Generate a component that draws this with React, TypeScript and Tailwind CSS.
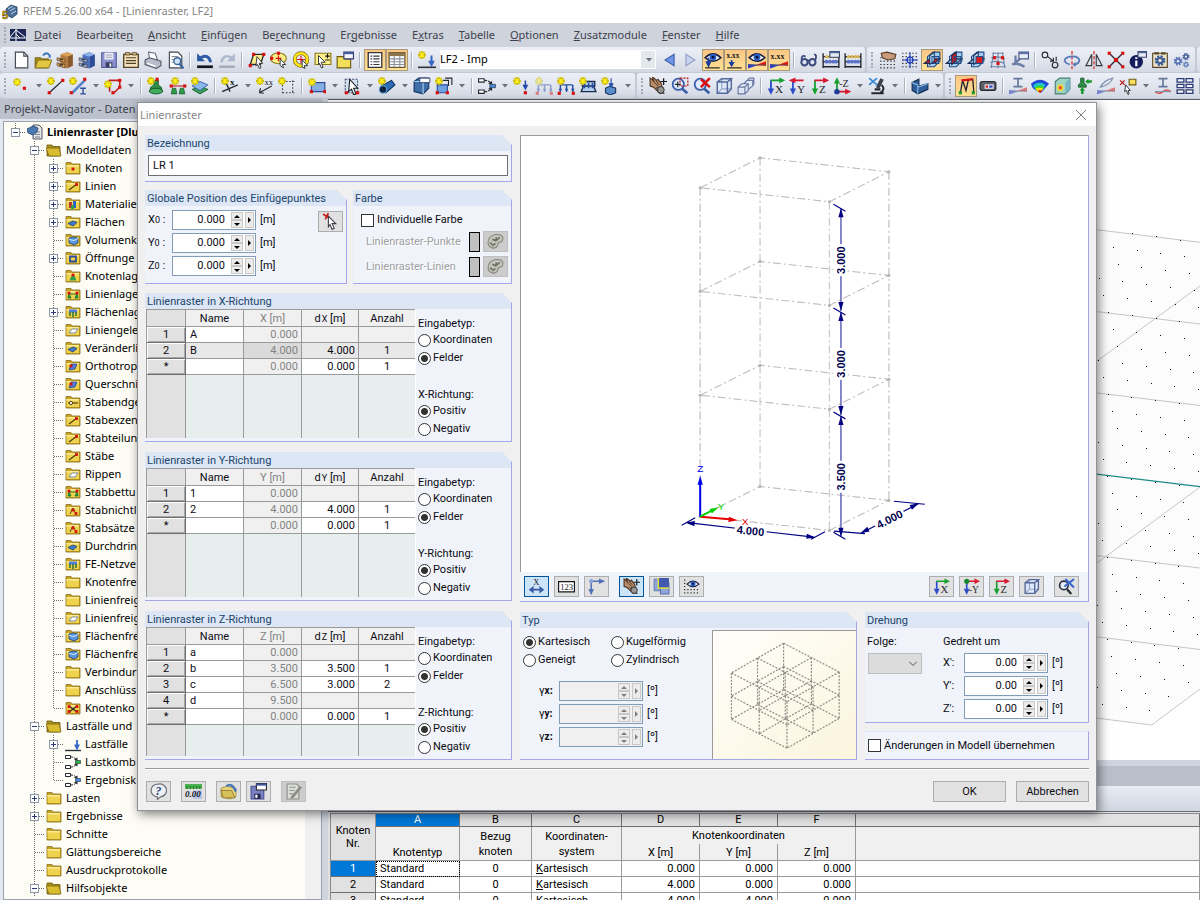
import type { ReactNode } from "react";

/* ---------- icon drawing helpers (16 x 16 grid) ---------- */

function Svg({ children, className = "size-[18px]" }: { children: ReactNode; className?: string }) {
  return (
    <svg viewBox="0 0 16 16" className={`${className} shrink-0`} fill="none" aria-hidden="true">
      {children}
    </svg>
  );
}

const Star = ({ x = 0, y = 0 }: { x?: number; y?: number }) => (
  <g transform={`translate(${x} ${y})`}>
    <path d="M3.5 0v7M0 3.5h7M1 1l5 5M6 1L1 6" stroke="#9c8f10" strokeWidth="1.8" />
    <path d="M3.5 0v7M0 3.5h7M1 1l5 5M6 1L1 6" stroke="#ffee1a" strokeWidth="1" />
  </g>
);

const Dot = ({ x, y, c = "#d81010" }: { x: number; y: number; c?: string }) => (
  <rect x={x - 1.4} y={y - 1.4} width="2.8" height="2.8" fill={c} />
);

const Axis = ({ h, v, t, flip = false, up = false, root }: { h: string; v: string; t: string; flip?: boolean; up?: boolean; root?: string }) => (
  <>
    <path d={up ? "M3.5 13V3M2 5l1.5-3L5 5z" : "M3.5 3v10M2 11l1.5 3L5 11z"} stroke={v} fill={v} strokeWidth="1.6" />
    {flip ? (
      <path d="M4 3h9M5 1.5L1.5 3 5 4.500z" stroke={h} fill={h} strokeWidth="1.4" />
    ) : (
      <path d={up ? "M3 13h9M11.500 11.5l3 1.5-3 1.5z" : "M3 3h9M11.500 1.5l3 1.5-3 1.5z"} stroke={h} fill={h} strokeWidth="1.4" />
    )}
    {root && <circle cx="3.5" cy={up ? 13 : 3} r="2.4" fill={root} />}
    <text x={t.length > 1 ? 5.5 : 7} y={up ? 9 : 14.5} fontSize={t.length > 1 ? 9 : 10} fill="#26262c" fontFamily="Liberation Serif">{t}</text>
  </>
);

const Drawer = ({ a, b, c }: { a: string; b: string; c: string }) => (
  <>
    <path d="M4 3l6-2 5 2v10l-5 2.500V5z" fill={b} />
    <path d="M4 3l6-2 5 2-5 2z" fill={a} />
    <path d="M4 3l6 2v10.500l-6-2z" fill={c} />
    <path d="M1 6l7 1.500V10L1 8.500zM1 10.500L8 12v3L1 13z" fill={a} stroke="#4a3626" strokeWidth=".6" />
    <path d="M3 7.800h3M3 12.300h3" stroke="#1d1a18" strokeWidth="1" />
  </>
);

const Folder = () => (
  <>
    <path d="M1 2.500h5l1 1.500h8v10H1z" fill="#c9a21e" stroke="#86701c" strokeWidth=".8" />
    <path d="M1.500 5h12.500v8H1.500z" fill="#efd24e" />
    <path d="M1.500 5h12.500v1.500H1.500z" fill="#fbeb98" />
  </>
);

const OpenFolder = () => (
  <>
    <path d="M1 3h5l1 1.500h7V14H1z" fill="#a98c14" stroke="#6f5c12" strokeWidth=".8" />
    <path d="M0 6h13l2 8H3z" fill="#d9bd2e" stroke="#7d6a1a" strokeWidth=".8" />
  </>
);

const Eye = () => (
  <>
    <path d="M1 6q7-7 14 0-7 6-14 0z" fill="#fff" stroke="#141c40" strokeWidth="1.400" />
    <circle cx="8" cy="5.500" r="3" fill="#2c62c8" />
    <circle cx="8" cy="5.500" r="1.300" fill="#0a1238" />
  </>
);

const Cube = () => (
  <>
    <path d="M2 4.500L6 1.500h8.500v9l-3.500 4H2z" fill="#dfe8f6" />
    <path d="M6 1.500v9h8.500M6 10.500l-4 4" stroke="#93a6cc" strokeWidth="1" />
    <path d="M2 4.500h9v10H2zM2 4.500l4-3h8.500L11 4.500M14.500 1.500v9L11 14.500" stroke="#56699c" strokeWidth="1.300" />
  </>
);

const Planes = ({ hot }: { hot: "flat" | "left" | "front" }) => (
  <>
    <path d="M4 5l5-4h6v8l-5 5H4z" fill="#a9cdf2" stroke="#1f4c86" strokeWidth="1" />
    <path d="M1 11l5-4h9l-5 4z" fill={hot === "flat" ? "#e01818" : "#8cb6e8"} stroke="#142c54" strokeWidth=".9" />
    <path d="M6 4v8l4-3V1z" fill={hot === "left" ? "#e01818" : "#bcdaf6"} stroke="#142c54" strokeWidth=".9" />
    <path d="M8 5h6v6H8z" fill={hot === "front" ? "#e01818" : "none"} stroke="#1f4c86" strokeWidth=".9" />
  </>
);

const GridDots = ({ rows = [2, 5, 8, 11, 14] }: { rows?: number[] }) => (
  <>
    {rows.map((y) => (
      <path key={y} d={`M1 ${y}h15`} stroke="#30343c" strokeWidth="1.100" strokeDasharray="1.200 1.800" />
    ))}
  </>
);

const Hand = () => (
  <>
    <path d="M1 1l3 2-1-3 4 3 1-1 3 4 1 5-4 2-4-4-3-1z" fill="#b98c6a" stroke="#4a3020" strokeWidth="1" />
    <path d="M3 3l5 5M6 3l3 4" stroke="#4a3020" strokeWidth=".8" />
    <path d="M6 9l3 6h5l-3-7z" fill="#5d5a58" />
    <path d="M13 1v6M10 4h6" stroke="#15171c" strokeWidth="1.100" />
    <circle cx="10.500" cy="11.500" r="3" fill="#9a9792" stroke="#2c2a28" strokeWidth=".8" />
  </>
);

const Lens = ({ children }: { children?: ReactNode }) => (
  <>
    <circle cx="6.500" cy="6.500" r="5" fill="#dfeafa" stroke="#3c5fae" strokeWidth="1.600" />
    <path d="M10 10.500l4.500 4" stroke="#3c5fae" strokeWidth="2.400" />
    {children}
  </>
);

const Beads = ({ win = false }: { win?: boolean }) => (
  <>
    <path d="M1 2v13M15 2v13M1 5h14M1 9.500h14M1 14h14" stroke="#23262e" strokeWidth="1.200" />
    {[4, 7, 10, 12.500].map((x) => <circle key={x} cx={x} cy="5" r="1.500" fill="#d6b254" />)}
    {[4, 7, 10, 12.500].map((x) => <circle key={x} cx={x} cy="9.500" r="1.700" fill="#5a72c8" />)}
    {win && <path d="M7 .5h8.500v5H7z" fill="#e8ecf4" stroke="#3a4668" />}
    {win && <path d="M7 .5h8.500V2H7z" fill="#4f66a0" />}
  </>
);

const Ramp = ({ muted = false }: { muted?: boolean }) => (
  <g opacity={muted ? 0.55 : 1}>
    <path d="M0 15.500v-4l9 1z" fill="#2338d0" />
    <path d="M7 12.500L16 9v4z" fill="#e01818" />
    <path d="M0 12.500h16" stroke="#4c5468" strokeWidth=".8" />
  </g>
);

const Frame = ({ muted = false }: { muted?: boolean }) => (
  <g opacity={muted ? 0.45 : 1}>
    <path d="M3 7v6M8.500 7v6M14 7v6M3 7h11" stroke="#264ea8" strokeWidth="1.300" />
    <path d="M1.500 10.500l1.500 3 1.500-3zM7 10.500l1.500 3 1.500-3zM12.500 10.500l1.500 3 1.500-3z" fill="#264ea8" />
    <Dot x={2} y={14.500} />
    <Dot x={14.500} y={14.500} />
    <Star />
  </g>
);

const Combo = ({ c }: { c: string }) => (
  <>
    <path d="M.5 1.500h5v3h-5zM.5 11.500h5v3h-5z" fill="#fff" stroke="#26282e" />
    <path d="M6 3q4 0 5.500 3M6 13q4 0 5.500-3" stroke="#26282e" strokeDasharray="2 1" />
    <path d="M9 5.500l3.500 1.500V3.500zM9 10.500L12.500 9v3.500z" fill="#26282e" />
    <path d="M10.500 6.500h5v3h-5z" fill={c} stroke="#1c2c3c" strokeWidth=".6" />
  </>
);

const LoadArrow = () => (
  <>
    <path d="M0 14.500h16" stroke="#2d3138" strokeWidth="1.400" />
    <path d="M12 4v6M10.500 9.500l1.500 3 1.500-3z" fill="#3867c4" stroke="#3867c4" strokeWidth="1.800" />
  </>
);

const Pin = () => (
  <>
    <path d="M6 3h4v4l3 2.500v2H3v-2L6 7z" fill="#2f8e48" stroke="#125024" strokeWidth=".8" />
    <ellipse cx="8" cy="12.500" rx="6" ry="2.500" fill="#3faf5c" stroke="#125024" strokeWidth=".8" />
  </>
);

const SlimCursor = () => <path d="M6 2l7 8H9.500l2 5-2 .8-2-5L5 13z" fill="#fff" stroke="#1b1d22" strokeWidth="1" />;

const Gear = ({ cx, cy, r, c }: { cx: number; cy: number; r: number; c: string }) => (
  <>
    <circle cx={cx} cy={cy} r={r} stroke={c} strokeWidth={r * 0.8} strokeDasharray={`${r * 0.5} ${r * 0.285}`} />
    <circle cx={cx} cy={cy} r={r * 0.7} stroke={c} strokeWidth={r * 0.5} />
  </>
);

const Microscope = () => (
  <>
    <path d="M11 1l3 1.500-4 8-3-1.500z" fill="#3c4048" />
    <path d="M3 14.500h11M12 7q4 4-1 7M6 11h5" stroke="#26282e" strokeWidth="1.800" />
    <path d="M1 1l7 6M8 1L1 7" stroke="#3c8cdc" strokeWidth="1.600" />
  </>
);

const IBeam = () => <path d="M4 1.500h8M8 1.500v7M4 8.500h8" stroke="#64789c" strokeWidth="1.500" />;

const Page = () => <path d="M3 1h7.500L14 4.500V15H3z" fill="#fff" stroke="#40454f" />;

const icons: Record<string, ReactNode> = {
  new: <><Page /><path d="M10.500 1v3.500H14" stroke="#40454f" /></>,
  open: <><path d="M1 6h5l1 1h6v8H1z" fill="#a98c14" stroke="#6f5c12" strokeWidth=".8" /><path d="M3.500 8H16l-3 7H1z" fill="#e2c840" stroke="#7d6a1a" strokeWidth=".8" /><path d="M8 4q3-4 6 0v2" stroke="#3e74bb" strokeWidth="1.800" /></>,
  block: <Drawer a="#dca25a" b="#8a5a2a" c="#b87c3c" />,
  blockBlue: <Drawer a="#8eb2ec" b="#2c4c98" c="#4c72c4" />,
  save: <><path d="M1.500 1.500h13v13h-13z" fill="#8d93d0" stroke="#5a5f9c" /><path d="M4 1.500h8v6H4z" fill="#f3f3fa" /><path d="M5 3.500h6M5 5.500h6" stroke="#9a9ab0" /><path d="M5 10h6v4.500H5z" fill="#3c4060" /><path d="M8.500 11h1.500v3H8.500z" fill="#fff" /></>,
  report: <><path d="M1.500 3h13v11.500h-13z" fill="#f2e2c0" stroke="#57421f" strokeWidth="1.200" /><path d="M3 1.500h4v2H3zM9 1.500h4v2H9z" fill="#e8d09a" stroke="#57421f" strokeWidth=".8" /><path d="M3.500 6h9M3.500 8.500h9M3.500 11h9" stroke="#57421f" /></>,
  print: <><path d="M4 1l6 1 2 6-7-1z" fill="#fff" stroke="#70747e" /><path d="M1 8l4-2 10 3v4l-4 2.500L1 12z" fill="#b9bccb" stroke="#54586a" /><path d="M3 11l7 2.500" stroke="#fff" strokeWidth="1.400" /></>,
  preview: <><Page /><path d="M5 5h6M5 7.500h4M5 10h3" stroke="#8a8e98" /><circle cx="10" cy="9" r="3" fill="#cfe2f6" stroke="#3a689e" strokeWidth="1.200" /><path d="M12 11.500l3.500 4" stroke="#3a689e" strokeWidth="2" /></>,
  undo: <><path d="M4 6q7-4 9 4" stroke="#2c5aa8" strokeWidth="2.600" /><path d="M1 2v7h7z" fill="#2c5aa8" /><path d="M1 14h14" stroke="#14161c" strokeWidth="2.400" /></>,
  redo: <g opacity=".6"><path d="M12 6Q5 2 3 10" stroke="#8c9cbc" strokeWidth="2.400" /><path d="M15 2v7H8z" fill="#8c9cbc" /><path d="M1 14h14" stroke="#7c8494" strokeWidth="2" /></g>,
  selRhomb: <><path d="M5 3h9l-3 9H2z" fill="#fdf08a" stroke="#26282e" strokeWidth="1.200" /><Dot x={5} y={3} /><Dot x={14} y={3} /><Dot x={2} y={13} /><path d="M8 5l5 6h-3l1.500 4-1.500.5L8.500 12 7 13z" fill="#fff" stroke="#26282e" strokeWidth=".8" /></>,
  selEllipse: <><ellipse cx="7.500" cy="6.500" rx="7" ry="4.800" fill="#fdf08a" stroke="#8c7a14" /><path d="M5 6.500h5M7.500 4v5" stroke="#d81010" /><Dot x={1.500} y={6.500} /><Dot x={7.500} y={2} /><path d="M9 7l5 5h-3l1 3-3-2z" fill="#fff" stroke="#26282e" strokeWidth=".8" /></>,
  selRing: <><circle cx="8" cy="7.500" r="5.600" stroke="#7c6a10" strokeWidth="3.400" /><circle cx="8" cy="7.500" r="5.600" stroke="#ffe41a" strokeWidth="2.200" /><path d="M8 4v7M4.500 7.500h7" stroke="#d81010" /><path d="M9 8l5 5h-3l.5 2.500L9 14z" fill="#fff" stroke="#26282e" strokeWidth=".8" /></>,
  selWindow: <><path d="M1 2h14v10H1z" fill="#fdf08a" stroke="#8c7a14" /><path d="M10 4.500h4M12 2.500v4M10 8h4" stroke="#15171c" /><path d="M4 4l6 6H6.500L8 14.500 6.500 15 5 11l-1 1z" fill="#fff" stroke="#26282e" strokeWidth=".8" /></>,
  newWin: <><path d="M1 5h6l1 2h5v8H1z" fill="#f3df5a" stroke="#6f5c12" /><path d="M7 1h8.500v6H7z" fill="#f7f8fc" stroke="#283a70" /><path d="M7 1h8.500v1.800H7z" fill="#4058a0" /></>,
  list: <><path d="M2 1.500h12v13H2z" fill="#fff" stroke="#35383f" strokeWidth="1.200" /><path d="M4 4.500h1.500M4 7h1.500M4 9.500h1.500M4 12h1.500M6.500 4.500H12M6.500 7H12M6.500 9.500H12M6.500 12H12" stroke="#35383f" /></>,
  table: <><path d="M1 1.500h14v13H1z" fill="#fff" stroke="#6a5a3c" strokeWidth="1.200" /><path d="M1 1.500h14v3H1z" fill="#8a7448" /><path d="M1 7h14M1 9.500h14M1 12h14M5.500 4v10M10.500 4v10" stroke="#8a909c" /></>,
  loadNew: <><LoadArrow /><Star /></>,
  prev: <path d="M12.500 3v10L4.500 8z" fill="#6f96e4" stroke="#3c5fae" />,
  next: <path d="M3.500 3v10l8-5z" fill="#c9d2ec" stroke="#93a0c8" />,
  eyeLoad: <><Eye /><path d="M4 6v6M2.500 10L4 13l1.500-3z" fill="#1a3c9c" stroke="#1a3c9c" strokeWidth="1.600" /><path d="M1 15h13" stroke="#15171c" /></>,
  xxx: <><text x=".5" y="6.500" fontSize="6.500" fontWeight="700" fill="#15171c" fontFamily="Liberation Serif">x.xx</text><path d="M5 8v4M3.500 10.500L5 13l1.500-2.500z" fill="#1a3c9c" stroke="#1a3c9c" strokeWidth="1.400" /><path d="M1 15h13" stroke="#15171c" /></>,
  eyeRamp: <><Eye /><Ramp /></>,
  xxxRamp: <><text x=".5" y="7.500" fontSize="7" fontWeight="700" fill="#15171c" fontFamily="Liberation Serif">x.xx</text><Ramp /></>,
  glasses: <><circle cx="4" cy="10" r="2.800" stroke="#3b4a7c" strokeWidth="1.800" /><circle cx="11" cy="10" r="2.800" stroke="#3b4a7c" strokeWidth="1.800" /><path d="M1.500 8Q1 3 5 5M13.500 8q2-5-1-5M6 8l3 1" stroke="#3b4a7c" strokeWidth="1.600" /></>,
  beadsWin: <Beads win />,
  beads: <Beads />,
  handGrid: <><GridDots rows={[6, 9, 12, 15]} /><path d="M2 2l5-1 8 2-1 4-6 1-5-2z" fill="#c79b7c" stroke="#5a3c28" /></>,
  gridOrigin: <><GridDots /><circle cx="8" cy="8" r="2.600" fill="#fff" stroke="#1c3cb8" strokeWidth="1.200" /><path d="M8 1v14M1 8h14" stroke="#1c3cb8" /></>,
  planeA: <Planes hot="flat" />,
  planeB: <Planes hot="left" />,
  planeC: <Planes hot="front" />,
  gridWarp: <><path d="M3 2h10M2 6q6-2 12 1M1 10q6-2 13 1M1 14h14M4 1L2 15M8 1v14M12 1l2 14" stroke="#6c86a8" /><Dot x={5} y={6} /><Dot x={12} y={6} /><Dot x={8} y={11} /></>,
  wrench: <><path d="M2 12l6-5M1 12q5-2 11 2M4 4v6" stroke="#6a7ea8" strokeWidth="2" /><path d="M7 1h8.500v6H7z" fill="#e9edf6" stroke="#4a5a88" /><path d="M7 1h8.500v1.800H7z" fill="#5a70a8" /></>,
  copyNode: <><circle cx="3.500" cy="3.500" r="2.500" stroke="#26282e" /><circle cx="12.500" cy="12.500" r="2.500" stroke="#26282e" /><path d="M6 5l5 4M11 6v3H8M13.500 9V5" stroke="#26282e" /></>,
  rotate: <><path d="M8 0v16" stroke="#d81010" strokeDasharray="3 1.500" /><path d="M6 12q-6-2-4-5 3-3 9-2 5 2 3 5-2 2-4 2" stroke="#5878b8" strokeWidth="1.600" /><path d="M11 9.500v5L8.500 12z" fill="#5878b8" /></>,
  mirror: <><path d="M8 0v16" stroke="#d81010" strokeDasharray="3 1.500" /><path d="M6 3v10H.8zM10 3v10h5.200z" stroke="#35383f" /></>,
  cross: <><path d="M2 2l12 12M14 2L2 14" stroke="#26282e" strokeWidth="1.200" /><Dot x={2} y={2} /><Dot x={14} y={2} /><Dot x={2} y={14} /><Dot x={14} y={14} /><circle cx="8" cy="8" r="2" fill="#d81010" /></>,
  info: <><circle cx="6.500" cy="9.500" r="6" fill="#161c5c" /><path d="M6.500 5.500v1.500M6.500 8.500v5" stroke="#fff" strokeWidth="2" /><path d="M8 .5h7.500v5H8z" fill="#e9edf6" stroke="#3a4668" /><path d="M8 .5h7.500V2H8z" fill="#4f66a0" /></>,
  gearPage: <><path d="M1.500 2h13v12.500h-13z" fill="#efe6c6" stroke="#57452a" /><path d="M3 1h4v2H3zM9 1h4v2H9z" fill="#57452a" /><Gear cx={8} cy={8.500} r={3.400} c="#3a5a9c" /></>,
  gears: <><Gear cx={4.500} cy={9} r={2.800} c="#5674b4" /><Gear cx={11.500} cy={5} r={2.300} c="#44609c" /><Gear cx={11.500} cy={12} r={2} c="#6a86c0" /></>,

  node: <><Star x={1} y={1} /><Dot x={11} y={10} /></>,
  line: <><path d="M2 14L14 3" stroke="#26282e" strokeWidth="1.200" /><Dot x={2} y={14} /><Dot x={14} y={3} /><Star /></>,
  member: <><path d="M3 14L14 3" stroke="#5a86c8" strokeWidth="2.400" /><Dot x={2} y={14} /><Dot x={14} y={2} /><path d="M10 10h5M12.500 10v5M10 15h5" stroke="#2c4c98" strokeWidth="1.200" /><Star /></>,
  polyline: <><path d="M5 13V3h9v6l-5 5" stroke="#c02020" strokeWidth="1.400" /><Dot x={14} y={3} /><Dot x={14} y={9} /><Dot x={8} y={14} /><Star y={3} /></>,
  support: <><Pin /><Star /><Dot x={9} y={2} /></>,
  lineSupport: <><path d="M2 8h12" stroke="#c02020" /><Dot x={2} y={8} /><Dot x={14} y={8} /><path d="M3 10h3l1 5H2zM10 10h3l1 5H9z" fill="#2f9e4c" stroke="#125024" strokeWidth=".6" /><Star x={2} /></>,
  areaSupport: <><path d="M1 11l7-3 7 3-7 4z" fill="#39a256" stroke="#125024" strokeWidth=".7" /><path d="M1 8l7-4 7 3-7 5z" fill="#8ab8ec" stroke="#2c4c98" strokeWidth=".7" /><Star /></>,
  release: <><path d="M4 4l4 9M1 13L15 7" stroke="#26282e" strokeWidth="1.200" /><text x="8" y="7" fontSize="8" fontWeight="700" fill="#15171c" fontFamily="Liberation Serif">x</text><Star /></>,
  dimension: <><path d="M3 14L14 8M3 14l1-4M3 14l4 .5" stroke="#26282e" /><text x="7.500" y="7" fontSize="7.500" fill="#15171c" fontFamily="Liberation Serif">xx</text><Star /></>,
  guide: <><path d="M4 4h11M4 14h11M4 4v11M13 3v12" stroke="#3c4048" strokeDasharray="1.500 1.500" /><Star /></>,
  surface: <><path d="M3 5h12v8H3z" fill="#86b0e4" stroke="#2c4c98" /><Dot x={3} y={13} /><Dot x={15} y={13} /><Star y={1} /></>,
  opening: <><path d="M2 2h11v12H2z" stroke="#4a5a80" strokeDasharray="2 1" fill="#d4dfef" /><SlimCursor /><Dot x={3} y={14} /><Dot x={13} y={14} /></>,
  pipe: <><path d="M3 8l9-5 3 4-8 7z" fill="#2d6cb6" stroke="#10335e" /><circle cx="4.500" cy="11" r="3.300" fill="#12233a" stroke="#5aa0e4" /><Star /></>,
  solid: <><path d="M1 4l4-3h9v9l-5 5-8-2z" fill="#3d6ea8" stroke="#18345c" /><path d="M1 4h8l5-3M9 4v11" stroke="#a8cdf2" /><path d="M6 1h9v4H6z" fill="#fff" stroke="#283a70" strokeWidth=".8" /></>,
  surfaceSet: <><path d="M2 7h9v7H2z" fill="#6fa2e0" stroke="#2c4c98" /><path d="M7 3h5v5M9 1h6v6" stroke="#26282e" /><Dot x={2} y={14} /><Dot x={11} y={14} /><Star /></>,
  combo: <Combo c="#4c8ce4" />,
  nodeLoad: <><path d="M11 3v5M9.500 7.500l1.500 3 1.500-3z" fill="#264ea8" stroke="#264ea8" strokeWidth="1.400" /><Dot x={11} y={14} /><Star /></>,
  lineLoadOff: <Frame muted />,
  lineLoad: <Frame />,
  areaLoad: <><path d="M3 4h11v4H3zM2 13l2-5h9l2 5z" fill="#b3cfef" stroke="#1c2c54" strokeWidth="1.200" /><path d="M5 5v5M8.500 5v5M12 5v5" stroke="#264ea8" strokeWidth="1.400" /><Star /></>,
  bodyLoad: <><path d="M4 10l4-2 5 2v4l-5 2-4-2z" fill="#5b8ccc" stroke="#1c3860" /><path d="M9 1v6M7.500 6L9 9l1.500-3z" fill="#264ea8" stroke="#264ea8" /><Star /></>,
  hand: <Hand />,
  zoomBox: <Lens><path d="M8 1h7v7H8z" stroke="#b01818" strokeDasharray="2 1" /><path d="M6 4v5M3.500 6.500h5" stroke="#26282e" /></Lens>,
  zoomOff: <Lens><path d="M7 2l8 7M15 1L7 9" stroke="#d81010" strokeWidth="2.200" /></Lens>,
  cube: <Cube />,
  cubes: <path d="M1 9h6v6H1zM1 9l3-3h6v6l-3 3M7 9l3-3M6 6l3-3h5v5l-4 3M9 3l2-2h4v5l-1 2" fill="#dfe6f4" stroke="#6a7aa4" />,
  viewX: <Axis h="#18a030" v="#2c4cc8" t="X" />,
  viewY: <Axis h="#d81830" v="#2c4cc8" t="Y" flip />,
  viewZ: <Axis h="#d81830" v="#18a030" t="Z" />,
  viewNZ: <Axis h="#d81830" v="#18a030" t="-Z" up root="#1c3c98" />,
  viewNY: <Axis h="#d81830" v="#2c4cc8" t="-Y" root="#148a2c" />,
  microscope: <Microscope />,
  volume: <><path d="M1 5l6-3v6l8-2v5l-9 4-5-3z" fill="#2e5f9a" stroke="#122c4c" /><path d="M1 5l5 2v8M6 9l9-3" stroke="#88b8e8" /></>,
  frameRed: <><path d="M3 14L5 3l9-1 1 12M5 3l3 9 2-9" stroke="#26282e" strokeWidth="1.200" /><path d="M4 3l10-1" stroke="#d81010" strokeWidth="2" /><Dot x={3} y={14} c="#1c9c34" /><Dot x={14.500} y={14} c="#1c9c34" /></>,
  film: <><rect x="1" y="4" width="14" height="8" rx="2" fill="#5b5e66" stroke="#26282e" /><path d="M5 6.500h8v4H5z" fill="#e8e8ee" /><path d="M6 8.500h2" stroke="#d81010" strokeWidth="2" /><path d="M9 8.500h3" stroke="#2c4cc8" strokeWidth="2" /></>,
  ibeamRamp: <><IBeam /><Ramp muted /></>,
  contour: <><path d="M0 6q8-7 16 0l-7 8q-8-2-9-8z" fill="#2348d8" /><path d="M2 7q6-4 11 0l-5 6q-5-2-6-6z" fill="#1cc8c8" /><path d="M3 9q5-3 9 0l-4 5q-4-2-5-5z" fill="#46d22c" /><path d="M4 10.500q4-2 7 0l-3 3.500q-3-1-4-3.500z" fill="#f4e418" /><path d="M6 12q2-1 4 0l-2 2.500z" fill="#e82818" /></>,
  contourCube: <><path d="M2 4l4-3h9v10l-4 4H2z" fill="#9cd6c0" stroke="#4c7c74" /><circle cx="6.500" cy="9.500" r="3" fill="#f0d840" /><circle cx="6.500" cy="9.500" r="1.500" fill="#e84830" /><path d="M11 5l4-4v10l-4 4z" fill="#74b4c8" /></>,
  pinArrow: <><path d="M5 1h3v4l2 2v2H3V7l2-2z" fill="#2f8e48" stroke="#125024" strokeWidth=".7" /><path d="M15 4h-4M6.500 15v-4" stroke="#149a2c" strokeWidth="2.200" /><path d="M12 1.500v5L9 4zM4 12h5L6.500 9z" fill="#149a2c" /></>,
  blade: <><path d="M3 9q3-6 11-8-2 6-11 8z" fill="#dfe6f2" stroke="#8090ac" /><Ramp muted /></>,
  pickFolder: <><path d="M9 2h6v5H9z" fill="#f3df5a" stroke="#6f5c12" /><path d="M1 3l4 4M5 3L1 7" stroke="#c02020" strokeWidth="1.200" /><path d="M6 7l4 5H8l1 3-1 .5L6.500 12 5 13z" fill="#fff" stroke="#26282e" strokeWidth=".8" /></>,
  ibeamWave: <><IBeam /><path d="M1 13q4 3 7 0t7 0" stroke="#d85858" strokeWidth="1.300" /><path d="M1 13h14" stroke="#8090ac" /></>,
  stack: <><path d="M1 1.500h6v3H1zM9 1.500h6v3H9zM1 6.500h6v3H1zM9 6.500h6v3H9zM1 11.500h6v3H1zM9 11.500h6v3H9z" fill="#f3f5fb" stroke="#2c3c74" strokeWidth="1.200" /></>,

  pick: <><path d="M1 1l6 4M6 0L3 6" stroke="#c82020" strokeWidth="1.600" /><path d="M6 3l7 7H9.500l2 4.500-2 .8-2-4.500L6 13z" fill="#fff" stroke="#3a3c42" strokeWidth="1" /></>,
  palette: <><path d="M1 9q0-6 7-7.500Q15 1 15 5t-4 4q-1 1-1 3-2 3-5 2-4-1-4-5z" fill="#c4c4bb" stroke="#85857c" /><path d="M3 9l2 2M5 6l3 1M9 4l-1 4M12 4l-3 3M8 10l-3 2" stroke="#6f7068" strokeWidth="1.500" /></>,
  dimX: <><text x="5" y="6.500" fontSize="8" fill="#15171c" fontFamily="Liberation Serif">X</text><path d="M3 11h10M4.500 9L2 11l2.500 2zM11.500 9l2.500 2-2.500 2z" stroke="#3a5ca8" fill="#3a5ca8" strokeWidth="1.600" /></>,
  numbers: <><path d="M.5 3.500h15v9.500H.5z" fill="#fff" stroke="#15171c" strokeWidth="1.200" /><text x="2" y="11" fontSize="8" fill="#15171c" fontFamily="Liberation Serif">123</text></>,
  axes: <><path d="M3 3v10M1.500 11L3 14.500 4.500 11zM3 3h9M11 1.500L14.500 3 11 4.500z" stroke="#5270b4" fill="#5270b4" strokeWidth="1.400" /><circle cx="3" cy="3" r="2" fill="#8aa4dc" /></>,
  layers: <><path d="M7 5h8v10H7z" fill="#8ea6dc" stroke="#5a70b0" /><path d="M1 1h5v11H1z" fill="#8ea6dc" stroke="#5a70b0" strokeWidth=".8" /><path d="M5 0h10v9H5z" fill="#4059ac" /><path d="M5 0v9.500h10" stroke="#f0ea20" strokeWidth="1.200" /></>,
  eyeGrid: <><GridDots /><path d="M3 0h13v9H3z" fill="#e1e1e1" /><g transform="translate(3 1) scale(.8)"><Eye /></g></>,
  zoomBlue: <><circle cx="5.500" cy="7" r="4" stroke="#2c303a" strokeWidth="1.600" fill="#e6edf8" /><path d="M8.500 10.500l4 4.500" stroke="#2c303a" strokeWidth="2.200" /><path d="M7 1l8 8M15 1L6 8" stroke="#3c68d0" strokeWidth="2" /></>,
  help: <><path d="M8 1a6.500 6 0 0 1 2 12l-3 2.500V13A6.500 6 0 0 1 8 1z" fill="#eef0f4" stroke="#70747e" strokeWidth="1.200" /><text x="5.200" y="11" fontSize="11" fontWeight="700" fontStyle="italic" fill="#22407c" fontFamily="Liberation Serif">?</text></>,
  units: <><path d="M0 1h16v4.500H0z" fill="#46b04a" /><path d="M2 3v2.500M5 3v2.500M8 3v2.500M11 3v2.500M14 3v2.500" stroke="#1c5c20" strokeWidth=".8" /><path d="M8 7h8v8H8z" fill="#b4c2e4" /><text x="0" y="13.500" fontSize="8.500" fontWeight="700" fontStyle="italic" fill="#15171c" fontFamily="Liberation Serif">0.00</text></>,
  openBlue: <><path d="M1 5l5-2 9 2v8l-6 2-8-2z" fill="#e9d77e" stroke="#9a8434" strokeWidth=".8" /><path d="M1 7h10l3 7H3z" fill="#d8c05a" stroke="#8b7430" strokeWidth=".8" /><path d="M6 3q5-4 9 5" stroke="#4a78b8" strokeWidth="2.200" /></>,
  saveWin: <><path d="M1 3h12v12H1z" fill="#7a80c4" stroke="#474c8c" /><path d="M4 10h6v5H4z" fill="#262a50" /><path d="M5 11h2v3H5z" fill="#fff" /><path d="M6 .5h9.500v6H6z" fill="#fff" stroke="#26282e" /><path d="M6 .5h9.500v2H6z" fill="#4058a0" /></>,
  note: <><path d="M2 1h9l2 2v12H2z" fill="#dcdcd8" stroke="#8c8c88" /><path d="M4 4h6M4 7h5M4 10h3" stroke="#8e9a8c" /><path d="M6 12l8-9 2 1-8 10-3 1z" fill="#8c8c86" /></>,
};

const Icon = ({ name, className }: { name: string; className?: string }) => <Svg className={className}>{icons[name]}</Svg>;

/* ---------- application shell ---------- */

const menuItems: [string, string, string][] = [
  ["", "D", "atei"], ["Bearbeite", "n", ""], ["", "A", "nsicht"], ["", "E", "infügen"], ["Be", "r", "echnung"], ["Er", "g", "ebnisse"],
  ["E", "x", "tras"], ["", "T", "abelle"], ["", "O", "ptionen"], ["", "Z", "usatzmodule"], ["", "F", "enster"], ["", "H", "ilfe"],
];

/* "|" separator, "v" drop-down arrow, "!" prefix for a pressed button */
function Tools({ items }: { items: string }) {
  return (
    <>
      {items.split(" ").map((it, i) => {
        if (it === "|") return <span key={i} className="mx-[3px] h-4 w-[2px] shrink-0 border-l border-[#aab1bf] bg-white" />;
        if (it === "v")
          return (
            <button key={i} type="button" aria-label="Mehr" className="flex w-[13px] shrink-0 items-center justify-center">
              <svg viewBox="0 0 6 4" className="h-1 w-[6px]" aria-hidden="true"><path d="M0 0h6L3 3.500z" fill="#6b717d" /></svg>
            </button>
          );
        const on = it.startsWith("!");
        const name = on ? it.slice(1) : it;
        return (
          <button key={i} type="button" aria-label={name} className={`flex h-[22px] w-[22px] shrink-0 items-center justify-center ${on ? "border border-[#a99a7c] bg-linear-to-b from-[#fbc684] to-[#fee193]" : ""}`}>
            <Icon name={name} />
          </button>
        );
      })}
    </>
  );
}

const band = "flex shrink-0 items-center rounded-[3px] bg-linear-to-b from-[#eceff6] via-[#e2e6ef] to-[#d3d8e2] h-[25px]";
const Grip = () => <span className="mx-1 h-4 w-[2px] shrink-0 border-l-2 border-dotted border-[#a3abba]" />;

function Toolbars() {
  return (
    <div className="flex shrink-0 flex-col gap-px overflow-hidden bg-[#c4cad5] pb-px">
      <div className="flex gap-[2px]">
        <div className={`${band} w-[865px]`}>
          <Grip />
          <Tools items="new open block blockBlue save report print preview | undo redo | selRhomb selEllipse selRing selWindow newWin | !list !table | loadNew" />
          <select aria-label="Lastfall" className="mx-[2px] h-[19px] w-[216px] shrink-0 appearance-none bg-white bg-[linear-gradient(#e3e7ee,#e3e7ee)] bg-[length:14px_17px] bg-[position:right_1px_center] bg-no-repeat text-[11px] text-black">
            <option>LF2 - Imp</option>
          </select>
          <svg viewBox="0 0 6 4" className="-ml-[12px] mr-[6px] h-1 w-[6px] shrink-0" aria-hidden="true"><path d="M0 0h6L3 3.500z" fill="#6b717d" /></svg>
          <Tools items="prev next !eyeLoad !xxx !eyeRamp !xxxRamp | glasses beadsWin beads" />
        </div>
        <div className={`${band} w-[328px]`}>
          <Grip />
          <Tools items="handGrid gridOrigin !planeA planeB planeC gridWarp wrench | copyNode rotate mirror cross info gearPage gears" />
        </div>
        <div className={`${band} flex-1`}><Grip /></div>
      </div>
      <div className="flex gap-[2px]">
        <div className={`${band} w-[635px]`}>
          <Grip />
          <Tools items="node v line member v polyline v | support lineSupport areaSupport | release v dimension guide | surface v opening v pipe v solid surfaceSet v | combo v nodeLoad lineLoadOff lineLoad areaLoad bodyLoad v" />
        </div>
        <div className={`${band} w-[306px]`}>
          <Grip />
          <Tools items="hand zoomBox zoomOff cube cubes | viewX viewY viewZ viewNZ v microscope v | volume v" />
        </div>
        <div className={`${band} flex-1`}>
          <Grip />
          <Tools items="!frameRed film | ibeamRamp contour contourCube pinArrow blade pickFolder v ibeamWave stack |" />
        </div>
      </div>
    </div>
  );
}

/* ---------- navigator tree ---------- */

type Mark = "none" | "dot" | "line" | "mat" | "blue" | "cube" | "hole" | "green" | "rail" | "hinge" | "flag" | "red" | "grid" | "cross" | "sheet";
type Node = { t: string; l: number; b?: "+" | "-"; k: "doc" | "open" | "folder" | "load" | "comboG" | "comboB"; m?: Mark; last?: boolean };

const f = (t: string, m: Mark = "none", b?: "+"): Node => ({ t, l: 2, k: "folder", m, b });

const tree: Node[] = [
  { t: "Linienraster [Dlu", l: 0, b: "-", k: "doc" },
  { t: "Modelldaten", l: 1, b: "-", k: "open" },
  f("Knoten", "dot", "+"), f("Linien", "line", "+"), f("Materialie", "mat", "+"), f("Flächen", "blue", "+"), f("Volumenk", "cube"),
  f("Öffnunge", "hole", "+"), f("Knotenlag", "green"), f("Linienlage", "rail"), f("Flächenlag", "grid", "+"), f("Liniengele", "sheet"),
  f("Veränderli", "blue"), f("Orthotrop", "flag"), f("Querschni", "flag"), f("Stabendge", "hinge"), f("Stabexzen", "line"),
  f("Stabteilun", "line"), f("Stäbe", "line"), f("Rippen", "sheet"), f("Stabbettu", "rail"), f("Stabnichtl", "red"), f("Stabsätze", "red"),
  f("Durchdrin", "blue"), f("FE-Netzve", "grid"), f("Knotenfre"), f("Linienfreig"), f("Linienfreig", "sheet"),
  f("Flächenfre", "cube"), f("Flächenfre", "cube"), f("Verbindur"), f("Anschlüss"), { ...f("Knotenko", "cross"), last: true },
  { t: "Lastfälle und", l: 1, b: "-", k: "open" },
  { t: "Lastfälle", l: 2, b: "+", k: "load" },
  { t: "Lastkomb", l: 2, k: "comboG" },
  { t: "Ergebnisk", l: 2, k: "comboB", last: true },
  { t: "Lasten", l: 1, b: "+", k: "folder" },
  { t: "Ergebnisse", l: 1, b: "+", k: "folder" },
  { t: "Schnitte", l: 1, k: "folder" },
  { t: "Glättungsbereiche", l: 1, k: "folder" },
  { t: "Ausdruckprotokolle", l: 1, k: "folder" },
  { t: "Hilfsobjekte", l: 1, b: "-", k: "open" },
];

const marks: Record<Mark, ReactNode> = {
  none: null,
  dot: <Dot x={8} y={9} />,
  line: <><path d="M4 12l8-6" stroke="#4a3c10" strokeWidth="1.200" /><Dot x={11.500} y={6.500} /></>,
  mat: <><path d="M4 6h3v6H4z" fill="#c03030" /><path d="M8 5h3v7H8z" fill="#2c62c8" /><path d="M6 9h3v4H6z" fill="#2f9e4c" /></>,
  blue: <path d="M3 9.500L8 7l4 1.500L8 12z" fill="#3f7ccc" stroke="#1c3c74" strokeWidth=".8" />,
  cube: <><path d="M4 6l4-1 5 1v5l-4 2-5-2z" fill="#5b96dc" stroke="#1c3c74" strokeWidth=".8" /><path d="M4 7.500l5 1 4-2" stroke="#d6e8fa" /></>,
  hole: <path d="M5 6.500h6v5H5z" fill="#efd24e" stroke="#2c4c98" strokeWidth="1.800" />,
  green: <><path d="M6.500 8h3l2 4.500h-7z" fill="#2f9e4c" /><Dot x={8} y={7} /></>,
  rail: <><path d="M4 8h8M4 8l-1 4h3zM12 8l-2 4h3z" stroke="#1c7c34" fill="#2f9e4c" /><Dot x={4} y={7} /><Dot x={12} y={7} /></>,
  hinge: <><path d="M3 9h10" stroke="#57421f" strokeWidth="1.200" /><circle cx="6" cy="9" r="1.600" fill="#fff" stroke="#57421f" /></>,
  flag: <><path d="M4 12l2-6h6l-2 5z" fill="#4c7cdc" stroke="#24408c" strokeWidth=".7" /><Dot x={6} y={8} /></>,
  red: <><path d="M5 12l3-6 3 6" stroke="#57421f" /><Dot x={8} y={8} /><Dot x={11} y={11.500} /></>,
  grid: <><path d="M4 5.500h8v3H4z" fill="#4c7cdc" /><path d="M5 8v4M8 8v5M11 8v4" stroke="#1c6c34" strokeWidth="1.400" /></>,
  cross: <><path d="M4 6l8 6M12 6l-8 6" stroke="#26282e" strokeWidth="1.200" /><Dot x={4} y={6.500} /><Dot x={12} y={6.500} /><Dot x={4} y={11.500} /><Dot x={12} y={11.500} /></>,
  sheet: <path d="M4 11l3-4h6l-3 4z" fill="#fff" stroke="#7c8cac" />,
};

function NodeIcon({ n }: { n: Node }) {
  if (n.k === "open") return <Svg className="size-4"><OpenFolder /></Svg>;
  if (n.k === "folder") return <Svg className="size-4"><Folder />{marks[n.m ?? "none"]}</Svg>;
  if (n.k === "load") return <Svg className="size-4"><LoadArrow /></Svg>;
  if (n.k === "comboG") return <Svg className="size-4"><Combo c="#28b83c" /></Svg>;
  if (n.k === "comboB") return <Svg className="size-4"><Combo c="#4c8ce4" /></Svg>;
  return (
    <Svg className="size-4">
      <path d="M6 1h6l3 3v11H6z" fill="#e4e6ea" stroke="#50545e" />
      <path d="M8 8h5M8 10.500h5M8 13h5" stroke="#7c808a" />
      <path d="M0 5l6-3 5 2-1 4-4 3-5-2z" fill="#4a78b0" stroke="#234468" strokeWidth=".8" />
    </Svg>
  );
}

const Guide = ({ d, box }: { d: string; box?: "+" | "-" }) => (
  <svg viewBox="0 0 19 18" className="h-[18px] w-[19px] shrink-0" fill="none" aria-hidden="true">
    <path d={d} stroke="#6c6c6c" strokeDasharray="1 1" />
    {box && <rect x="5.500" y="5.500" width="8" height="8" fill="#fff" stroke="#8c97a8" />}
    {box && <path d={box === "+" ? "M7 9.500h5M9.500 7v5" : "M7 9.500h5"} stroke="#2a3c78" />}
  </svg>
);

function TreeRow({ n }: { n: Node }) {
  const stem = n.last || n.l === 0 ? "M9.500 0v9M10 9.500h9" : "M9.500 0v18M10 9.500h9";
  return (
    <li className="flex h-[18px] items-center">
      {n.l > 0 && <span className="w-[19px] shrink-0" />}
      {n.l === 2 && <Guide d="M9.500 0v18" />}
      <Guide d={stem} box={n.b} />
      <span className="flex w-5 shrink-0 justify-center"><NodeIcon n={n} /></span>
      <span className={`pl-[2px] whitespace-nowrap ${n.l === 0 ? "font-bold" : ""}`}>{n.t}</span>
    </li>
  );
}

function Navigator() {
  return (
    <aside className="flex w-[322px] shrink-0 flex-col bg-[#e3e7f0]">
      <h2 className="h-5 bg-[#bbc2cd] pl-1 text-[11px] leading-5 text-[#3c4048]">Projekt-Navigator - Daten</h2>
      <div className="mt-[2px] ml-[3px] flex min-h-0 flex-1 border border-[#9aa1ae] bg-[#fdfdf5]">
        <ul className="min-h-0 flex-1 overflow-hidden pt-px pl-[2px] text-[11px] leading-[18px] text-black">
          {tree.map((n, i) => <TreeRow key={i} n={n} />)}
        </ul>
        <div className="w-4 bg-[#f0f0f0]" />
      </div>
    </aside>
  );
}

/* ---------- work area behind the dialog ---------- */

function GridDotsField() {
  const dots: [number, number][] = [];
  for (let a = -20; a < 20; a++)
    for (let c = -30; c < 30; c++) {
      const x = 1117.3 + 23.8 * a + 19.1 * c;
      const y = 346 + 3.06 * a - 13.9 * c;
      const top = 230 + (x - 1097) * 0.12;
      const bottom = x < 1151.7 ? 718 + (x - 1097) * 0.128 : 725 - (x - 1151.7) * 0.745;
      if (x > 1000 && x < 1200 && y > top - 1 && y < bottom + 1) dots.push([x, y]);
    }
  return (
    <svg viewBox="1000 100 200 660" className="h-[660px] w-[200px] shrink-0" fill="none" aria-hidden="true">
      <path d="M1000 218L1200 242V689L1151.700 725L1000 706z" fill="#fcfcfc" />
      <path
        d="M1000 218L1200 242.300M1000 300L1200 324M1000 381L1200 405.500M1000 544L1200 568M1000 625L1200 649.500M1000 706L1151.700 725L1200 689M1097 361L1200 286M1097 563L1200 487"
        stroke="#c6c6c6"
      />
      <path d="M1000 462.500L1200 486.700" stroke="#1a8a86" strokeWidth="1.200" />
      {dots.map(([x, y]) => <rect key={`${x},${y}`} x={Math.round(x)} y={Math.round(y)} width="1" height="1" fill="#101010" />)}
    </svg>
  );
}

function NodeTable() {
  const rows = [["1", "0.000", "0.000", "0.000"], ["2", "4.000", "0.000", "0.000"], ["3", "4.000", "4.000", "0.000"]];
  const head = "border-r border-b border-[#9a9a9a] bg-[#f0f0f0] font-normal";
  const cell = "border-r border-b border-[#9a9a9a] bg-white px-1";
  return (
    <table className="w-full table-fixed border-separate border-spacing-0 border-l border-t border-[#8a8a8a] font-['Roboto',sans-serif] text-[11px] leading-[15px]">
      <colgroup>
        <col className="w-[45px]" /><col className="w-[84px]" /><col className="w-[72px]" /><col className="w-[90px]" />
        <col className="w-[78px]" /><col className="w-[78px]" /><col className="w-[78px]" /><col />
      </colgroup>
      <thead>
        <tr className="h-[13px] leading-3">
          <th rowSpan={3} className="border-r border-b border-[#9a9a9a] bg-[#e1e1e1] font-normal leading-[13px]">Knoten<br />Nr.</th>
          {["A", "B", "C", "D", "E", "F", ""].map((c, i) => (
            <th key={i} className={`border-r border-b border-[#6f6f6f] font-normal ${c === "A" ? "bg-[#0078d7] text-white" : "bg-[#e1e1e1]"}`}>{c}</th>
          ))}
        </tr>
        <tr className="h-[17px]">
          <th rowSpan={2} className={`${head} align-bottom`}>Knotentyp</th>
          <th rowSpan={2} className={head}>Bezug<br />knoten</th>
          <th rowSpan={2} className={head}>Koordinaten-<br />system</th>
          <th colSpan={3} className="border-r border-[#9a9a9a] bg-[#f0f0f0] font-normal">Knotenkoordinaten</th>
          <th rowSpan={2} className={head} />
        </tr>
        <tr className="h-[17px]"><th className={head}>X [m]</th><th className={head}>Y [m]</th><th className={head}>Z [m]</th></tr>
      </thead>
      <tbody>
        {rows.map((r, i) => (
          <tr key={r[0]} className="h-4">
            <th className={`border-r border-b border-[#6f6f6f] font-normal ${i === 0 ? "bg-[#0078d7] text-white" : "bg-[#e1e1e1]"}`}>{r[0]}</th>
            <td className={`${cell} ${i === 0 ? "outline-1 -outline-offset-1 outline-dotted outline-black" : ""}`}>Standard</td>
            <td className={`${cell} text-center`}>0</td>
            <td className={cell}><u>K</u>artesisch</td>
            <td className={`${cell} text-right`}>{r[1]}</td>
            <td className={`${cell} text-right`}>{r[2]}</td>
            <td className={`${cell} text-right`}>{r[3]}</td>
            <td className={cell} />
          </tr>
        ))}
      </tbody>
    </table>
  );
}

function WorkArea() {
  return (
    <main className="flex min-w-0 flex-1 flex-col bg-[#cfd4de] pl-[6px]">
      <div className="flex min-h-0 flex-1 justify-end overflow-hidden border-t border-[#5c5f66] bg-white"><GridDotsField /></div>
      <div className="h-[140px] shrink-0 overflow-hidden">
        <div className="mt-[6px] h-5 bg-[#b9c0cb]" />
        <div className="h-[26px] border-b border-[#6a6d74] bg-linear-to-b from-[#e9edf6] to-[#d0d5df]" />
        <div className="bg-[#e1e1e1] pt-px pl-[2px]"><NodeTable /></div>
      </div>
    </main>
  );
}

/* ---------- dialog building blocks ---------- */

const edge = "border-[#a5a5ea]";

function Group({ title, children, className = "", body = "" }: { title: string; children: ReactNode; className?: string; body?: string }) {
  return (
    <section className={`flex flex-col ${className}`}>
      <h3 className={`h-4 border-r ${edge} bg-[#dce6f4] pl-[2px] leading-[17px] text-[#20456e] [clip-path:polygon(0_0,calc(100%-10px)_0,100%_10px,100%_100%,0_100%)]`}>{title}</h3>
      <div className={`flex-1 border-r border-b ${edge} bg-[#f0f4fa] ${body}`}>{children}</div>
    </section>
  );
}

function Spin({ id, value, unit, disabled = false }: { id: string; value: string; unit: string; disabled?: boolean }) {
  const c = disabled ? "#808080" : "#000";
  const btn = "flex items-center justify-center border border-[#c8c8c8] bg-[#ececec]";
  return (
    <>
      <span className={`flex h-5 w-[84px] shrink-0 gap-[2px] border border-[#7f9db9] p-px ${disabled ? "bg-[#f0f0f0]" : "bg-white"}`}>
        <input id={id} defaultValue={value} disabled={disabled} className="min-w-0 flex-1 bg-transparent pr-[4px] text-right outline-none" />
        <span className="flex w-3 flex-col">
          <button type="button" disabled={disabled} aria-label="Mehr" className={`${btn} flex-1`}><svg viewBox="0 0 6 3" className="h-[3px] w-[6px]"><path d="M0 3h6L3 0z" fill={c} /></svg></button>
          <button type="button" disabled={disabled} aria-label="Weniger" className={`${btn} flex-1`}><svg viewBox="0 0 6 3" className="h-[3px] w-[6px]"><path d="M0 0h6L3 3z" fill={c} /></svg></button>
        </span>
        <button type="button" disabled={disabled} aria-label="Auswahl" className={`${btn} w-[9px]`}><svg viewBox="0 0 3 6" className="h-[6px] w-[3px]"><path d="M0 0v6l3-3z" fill={c} /></svg></button>
      </span>
      <span className="pl-1">{unit}</span>
    </>
  );
}

function Radio({ name, label, on = false }: { name: string; label: string; on?: boolean }) {
  return (
    <label className="flex h-[18px] items-center gap-[2px] leading-[18px] whitespace-nowrap">
      <input type="radio" name={name} defaultChecked={on} className="size-[13px] shrink-0 appearance-none rounded-full border border-[#333] bg-white checked:bg-[radial-gradient(circle,#333_0_3px,#fff_4px)]" />
      {label}
    </label>
  );
}

function Check({ label }: { label: string }) {
  return (
    <label className="flex items-center gap-[3px] whitespace-nowrap">
      <input type="checkbox" className="size-[13px] shrink-0 appearance-none border border-[#333] bg-white checked:bg-[#333]" />
      {label}
    </label>
  );
}

function ToolButton({ icon, on = false, disabled = false }: { icon: string; on?: boolean; disabled?: boolean }) {
  return (
    <button type="button" aria-label={icon} disabled={disabled} className={`flex h-[21px] w-[25px] shrink-0 items-center justify-center border ${on ? "border-[#00559b] bg-[#cce4f7]" : disabled ? "border-[#bfbfbf] bg-[#cccccc]" : "border-[#adadad] bg-[#e1e1e1]"}`}>
      <Icon name={icon} className="size-[17px]" />
    </button>
  );
}

type Row = [string, string, string, string, string];

function RasterGroup({ axis, rows, selected = -1 }: { axis: string; rows: Row[]; selected?: number }) {
  const line = "border-r border-b border-[#9a9a9a]";
  return (
    <Group title={`Linienraster in ${axis}-Richtung`} body="flex pl-px pb-[3px]">
      <table className="h-[129px] w-[269px] table-fixed border-separate border-spacing-0 border-t border-l border-[#9a9a9a] leading-[15px]">
        <colgroup><col className="w-[39px]" /><col className="w-[58px]" /><col className="w-[58px]" /><col className="w-[57px]" /><col className="w-[56px]" /></colgroup>
        <thead>
          <tr className="h-[17px] bg-[#f0f0f0]">
            <th className={`${line} bg-[#e1e1e1]`} />
            <th className={`${line} font-normal`}>Name</th>
            <th className={`${line} font-normal text-[#838383]`}>{axis} [m]</th>
            <th className={`${line} font-normal`}>d<span className="pl-px text-[9px] leading-none">{axis}</span> [m]</th>
            <th className="border-b border-[#9a9a9a] font-normal">Anzahl</th>
          </tr>
        </thead>
        <tbody>
          {rows.map((r, i) => {
            const sel = i === selected;
            const open = sel ? "bg-[#e8e8e8]" : r[3] ? "bg-white" : "bg-[#f0f0f0]";
            return (
              <tr key={i} className="h-4">
                <th className="border-r border-b border-[#6f6f6f] bg-[#e1e1e1] font-normal shadow-[inset_1px_1px_0_#fff,inset_-1px_-1px_0_#a8a8a8]">{r[0]}</th>
                <td className={`${line} pl-[4px] ${sel ? "bg-[#e8e8e8]" : "bg-white"}`}>{r[1]}</td>
                <td className={`${line} pr-[3px] text-right text-[#838383] ${sel ? "bg-[#dadada]" : "bg-[#f0f0f0]"}`}>{r[2]}</td>
                <td className={`${line} pr-[3px] text-right ${open}`}>{r[3]}</td>
                <td className={`border-b border-[#9a9a9a] text-center ${open}`}>{r[4]}</td>
              </tr>
            );
          })}
          <tr className="bg-[#e7eeee]">
            <td className="border-r border-[#9a9a9a] bg-[#e1e1e1]" /><td className="border-r border-[#9a9a9a]" /><td className="border-r border-[#9a9a9a]" /><td className="border-r border-[#9a9a9a]" /><td />
          </tr>
        </tbody>
      </table>
      <div className="flex flex-1 flex-col border-l border-white pt-[6px] pl-[2px]">
        <p className="h-4 leading-[17px]">Eingabetyp:</p>
        <Radio name={`typ-${axis}`} label="Koordinaten" />
        <Radio name={`typ-${axis}`} label="Felder" on />
        <p className="mt-[19px] h-4 leading-[17px]">{axis}-Richtung:</p>
        <Radio name={`dir-${axis}`} label="Positiv" on />
        <Radio name={`dir-${axis}`} label="Negativ" />
      </div>
    </Group>
  );
}

/* ---------- drawings ---------- */

function Tip({ x, y, a, c = "#000082" }: { x: number; y: number; a: number; c?: string }) {
  return <path d="M0 0L-9 2.600V-2.600z" fill={c} transform={`translate(${x} ${y}) rotate(${a})`} />;
}

function Preview() {
  const levels = [187.5, 291.3, 395.3, 516.7];
  const label = { fontSize: 11, fontWeight: 700, fill: "#000050", textAnchor: "middle" as const, fontFamily: "Liberation Sans" };
  const spans: [number, number, number, string][] = [[208, 311, 260, "3.000"], [312, 415, 364, "3.000"], [416, 537, 477, "3.500"]];
  return (
    <svg viewBox="521 136 568 436" className="block h-[436px] w-full" fill="none" role="img" aria-label="Linienraster Vorschau">
      <g stroke="#bdbdbd" strokeWidth="1.100" strokeDasharray="8 3 2 3">
        {levels.map((y) => (
          <path key={y} d={`M700.500 ${y}L760.500 ${y - 30}L889.500 ${y - 16}L830 ${y + 14}z`} />
        ))}
        <path d="M700.500 187.500V516.700M889.500 171.500V500.700" strokeWidth="1.800" stroke="#d3d3d3" />
        <path d="M760.500 157.500V487M830 201.500V530.500" strokeWidth="1.300" stroke="#cbcbcb" />
      </g>
      {levels.map((y) => (
        <g key={y} fill="#b5b5b5">
          <circle cx="700.500" cy={y} r="1.600" /><circle cx="760.500" cy={y - 30} r="1.600" /><circle cx="889.500" cy={y - 16} r="1.600" /><circle cx="830" cy={y + 14} r="1.600" />
        </g>
      ))}
      {spans.map(([a, b, m, t]) => (
        <g key={a}>
          <path d={`M841.500 ${a}V${b}`} stroke="#7474c0" strokeWidth="1.700" />
          <path d={`M834 ${a - 4}l12 7`} stroke="#000082" strokeWidth="1.200" />
          <Tip x={841.5} y={a} a={-90} />
          <Tip x={841.5} y={b} a={90} />
          <rect x="834" y={m - 16} width="14" height="32" fill="#fff" />
          <text {...label} transform={`translate(845.5 ${m}) rotate(-90)`}>{t}</text>
        </g>
      ))}
      <path
        d="M834 532.500l12 7M688 523L814 537.500M682 525.500l13.500-7.500M811.500 539.500l14-7.500M862.500 533L919 504M834.500 531.500l31 2.500M894.500 501.500l31 3"
        stroke="#000082"
        strokeWidth="1.200"
      />
      <Tip x={686} y={523} a={186} /><Tip x={816} y={537.7} a={7} /><Tip x={861} y={533.5} a={153} /><Tip x={919.5} y={503.5} a={-27} />
      <rect x="-16" y="-6" width="32" height="12" fill="#fff" transform="translate(751 531) rotate(6)" />
      <text {...label} transform="translate(750.5 535) rotate(6)">4.000</text>
      <rect x="-16" y="-6" width="32" height="12" fill="#fff" transform="translate(890 519) rotate(-27)" />
      <text {...label} transform="translate(892 523) rotate(-27)">4.000</text>
      <path d="M700.500 517V484" stroke="#0000f0" strokeWidth="2" /><Tip x={700.5} y={476} a={-90} c="#0000f0" />
      <path d="M700.500 517L730 519.500" stroke="#e60000" strokeWidth="2" /><Tip x={738} y={520.5} a={5} c="#e60000" />
      <path d="M700.500 517L712 511" stroke="#00d000" strokeWidth="2" /><Tip x={719} y={507.5} a={-27} c="#00d000" />
      <g fontFamily="Liberation Sans" fontSize="10" textAnchor="middle">
        <text x="700.500" y="472" fill="#0000f0">Z</text><text x="745.500" y="525" fill="#e60000">X</text><text x="721.500" y="510" fill="#00d000">Y</text>
      </g>
    </svg>
  );
}

function TypePicture() {
  const p = (i: number, j: number, k: number) => [70.6 - 26.3 * i + 28 * j, 12.3 + 15 * i + 14.5 * j + 23.4 * k];
  const lines: string[] = [];
  for (let a = 0; a < 3; a++)
    for (let b = 0; b < 3; b++) {
      lines.push(`M${p(0, a, b)}L${p(2, a, b)}`, `M${p(a, 0, b)}L${p(a, 2, b)}`, `M${p(a, b, 0)}L${p(a, b, 2)}`);
    }
  return (
    <svg viewBox="0 0 143 129" className="mt-[2px] h-[129px] w-[144px] shrink-0 border-t border-l border-[#9a9a9a] bg-linear-to-br from-[#fffefb] to-[#fbf5dd]" role="img" aria-label="Kartesisches Raster">
      <path d={lines.join("")} stroke="#8d8a84" strokeWidth="1.200" strokeDasharray="2 1.400" fill="none" />
    </svg>
  );
}

/* ---------- dialog ---------- */

function Dialog() {
  return (
    <div role="dialog" aria-labelledby="dlg" className="absolute top-[102px] left-[137px] w-[960px] border border-[#8f9399] bg-[#f0f0f0] font-['Roboto',sans-serif] text-[11px] leading-[14px] text-[#0c0c14] shadow-[2px_3px_10px_rgba(0,0,0,0.5)]">
      <header className="flex h-[23px] items-center justify-between bg-white pl-[2px] pr-[9px]">
        <h2 id="dlg" className="font-['Noto_Sans',sans-serif] text-[#858585]">Linienraster</h2>
        <button type="button" aria-label="Schließen"><svg viewBox="0 0 12 12" className="size-3"><path d="M1 1l10 10M11 1L1 11" stroke="#7a7a7a" /></svg></button>
      </header>
      <div className="flex gap-2 px-[7px] pt-[9px]">
        <div className="flex w-[367px] shrink-0 flex-col gap-[10px]">
          <div className="flex flex-col gap-2">
            <Group title="Bezeichnung" body="px-[3px] pt-1 pb-[5px]">
              <input aria-label="Bezeichnung" defaultValue="LR 1" className="block h-[21px] w-full border border-[#707070] bg-white px-1" />
            </Group>
            <div className="-mb-px flex gap-[6px]">
              <Group title="Globale Position des Einfügepunktes" className="w-[202px]" body="flex justify-between pt-1 pr-[3px] pb-[7px] pl-[3px]">
                <div className="flex flex-col gap-[3px]">
                  {["X", "Y", "Z"].map((a) => (
                    <div key={a} className="flex items-center">
                      <label htmlFor={`p-${a}`} className="w-6">{a}<span className="text-[9px]">0</span> :</label>
                      <Spin id={`p-${a}`} value="0.000" unit="[m]" />
                    </div>
                  ))}
                </div>
                <span className="pt-px"><ToolButton icon="pick" /></span>
              </Group>
              <Group title="Farbe" className="flex-1" body="flex flex-col gap-1 pt-[7px] pr-[3px] pl-2">
                <Check label="Individuelle Farbe" />
                {["Punkte", "Linien"].map((t) => (
                  <div key={t} className="flex items-center gap-[3px] pl-[5px] text-[#a0a0a0]">
                    <span className="flex-1 whitespace-nowrap [text-shadow:1px_1px_0_#fff]">Linienraster-{t}</span>
                    <span className="h-5 w-[11px] border border-black bg-[#c0c0c0]" />
                    <ToolButton icon="palette" disabled />
                  </div>
                ))}
              </Group>
            </div>
          </div>
          <RasterGroup axis="X" selected={1} rows={[["1", "A", "0.000", "", ""], ["2", "B", "4.000", "4.000", "1"], ["*", "", "0.000", "0.000", "1"]]} />
          <RasterGroup axis="Y" rows={[["1", "1", "0.000", "", ""], ["2", "2", "4.000", "4.000", "1"], ["*", "", "0.000", "0.000", "1"]]} />
          <RasterGroup axis="Z" rows={[["1", "a", "0.000", "", ""], ["2", "b", "3.500", "3.500", "1"], ["3", "c", "6.500", "3.000", "2"], ["4", "d", "9.500", "", ""], ["*", "", "0.000", "0.000", "1"]]} />
        </div>
        <div className="flex min-w-0 flex-1 flex-col gap-[10px]">
          <section className={`border-r border-b ${edge} bg-[#f0f4fa]`}>
            <div className="border-t border-l border-[#9a9a9a] bg-white"><Preview /></div>
            <div className="flex gap-[5px] py-1 pr-[9px] pl-1">
              <ToolButton icon="dimX" on /><ToolButton icon="numbers" /><ToolButton icon="axes" />
              <span className="w-0" />
              <ToolButton icon="hand" on /><ToolButton icon="layers" /><ToolButton icon="eyeGrid" />
              <span className="flex-1" />
              <ToolButton icon="viewX" /><ToolButton icon="viewNY" /><ToolButton icon="viewZ" /><ToolButton icon="cube" />
              <span className="w-0" />
              <ToolButton icon="zoomBlue" />
            </div>
          </section>
          <div className="flex flex-1 gap-2">
            <Group title="Typ" className="flex-1" body="flex justify-between pl-[3px]">
              <div className="pt-[5px]">
                <div className="grid grid-cols-[88px_88px]">
                  <Radio name="kind" label="Kartesisch" on /><Radio name="kind" label="Kugelförmig" />
                  <Radio name="kind" label="Geneigt" /><Radio name="kind" label="Zylindrisch" />
                </div>
                <div className="mt-[12px] flex flex-col gap-[3px] pl-4">
                  {["x", "y", "z"].map((a) => (
                    <div key={a} className="flex items-center">
                      <label htmlFor={`g-${a}`} className="w-5 font-bold"><span className="font-normal">γ</span><span className="text-[10px]">{a}</span>:</label>
                      <Spin id={`g-${a}`} value="" unit="[º]" disabled />
                    </div>
                  ))}
                </div>
              </div>
              <TypePicture />
            </Group>
            <div className="flex w-[224px] flex-col gap-2">
              <Group title="Drehung" body="flex pt-[5px] pb-[3px] pl-[2px]">
                <div className="w-[76px]">
                  <label htmlFor="order" className="block h-5 leading-[18px]">Folge:</label>
                  <div className="relative ml-px w-[54px]">
                    <select id="order" disabled className="block h-[21px] w-full appearance-none border border-[#bfbfbf] bg-[#dcdcdc]" />
                    <svg viewBox="0 0 8 5" className="absolute top-2 right-[5px] h-[5px] w-2" aria-hidden="true"><path d="M0 .5l4 4 4-4" stroke="#555" fill="none" /></svg>
                  </div>
                </div>
                <div>
                  <p className="h-5 leading-[18px]">Gedreht um</p>
                  <div className="flex flex-col gap-[3px]">
                    {["X", "Y", "Z"].map((a) => (
                      <div key={a} className="flex items-center">
                        <label htmlFor={`r-${a}`} className="w-[21px]">{a}':</label>
                        <Spin id={`r-${a}`} value="0.00" unit="[º]" />
                      </div>
                    ))}
                  </div>
                </div>
              </Group>
              <div className={`flex h-[29px] items-center border-r border-b ${edge} border-t border-t-[#dce6f4] bg-[#f0f4fa] pl-[3px]`}>
                <Check label="Änderungen in Modell übernehmen" />
              </div>
            </div>
          </div>
        </div>
      </div>
      <footer className="mx-[7px] mt-2 flex items-center border-t border-[#9a9a9a] pt-3 pb-2 shadow-[inset_0_1px_0_#fff]">
        <span className="ml-px flex gap-[5px]">
          <ToolButton icon="help" />
          <span className="w-0" />
          <ToolButton icon="units" />
          <span className="w-0" />
          <ToolButton icon="openBlue" /><ToolButton icon="saveWin" />
          <span className="w-0" />
          <ToolButton icon="note" disabled />
        </span>
        <span className="flex-1" />
        <button type="button" className="h-[21px] w-[73px] border border-[#adadad] bg-[#e1e1e1]">OK</button>
        <button type="button" className="ml-[10px] h-[21px] w-[73px] border border-[#adadad] bg-[#e1e1e1]">Abbrechen</button>
      </footer>
    </div>
  );
}

export default function App() {
  return (
    <div className="relative flex h-screen flex-col overflow-hidden bg-white font-['Noto_Sans',sans-serif] text-[11px]">
      <header className="flex h-[23px] shrink-0 items-center gap-[5px] bg-white pl-[2px] text-[#858585]">
        <svg viewBox="0 0 16 16" className="size-4" aria-hidden="true">
          <path d="M4 5l5-4 6 2v7l-5 4-5-3z" fill="#4a6e98" stroke="#1f3b5c" strokeWidth=".8" />
          <path d="M6 5l5-3M8 7l5-3M9 10l5-3" stroke="#b6d2ee" />
          <text x="0" y="15" fontSize="11" fontWeight="700" fill="#f2c414" stroke="#5c4708" strokeWidth=".6" fontFamily="Liberation Sans">5</text>
        </svg>
        <h1>RFEM 5.26.00 x64 - [Linienraster, LF2]</h1>
      </header>
      <nav className="flex h-6 shrink-0 items-center bg-[#cfd3dc] text-[#3e424c]">
        <Grip />
        <svg viewBox="0 0 16 12" className="mr-2 h-3 w-4" aria-hidden="true">
          <path d="M0 0h16v12H0z" fill="#1c2858" />
          <path d="M0 9h16M6 0v12M6 1L0 8M6 1l9 7M6 5l4 4" stroke="#fff" fill="none" />
        </svg>
        <div className="flex gap-[15px]">
          {menuItems.map(([a, u, b]) => <a key={a + u + b} href="#menu">{a}<u>{u}</u>{b}</a>)}
        </div>
      </nav>
      <Toolbars />
      <div className="flex min-h-0 flex-1">
        <Navigator />
        <WorkArea />
      </div>
      <Dialog />
    </div>
  );
}
